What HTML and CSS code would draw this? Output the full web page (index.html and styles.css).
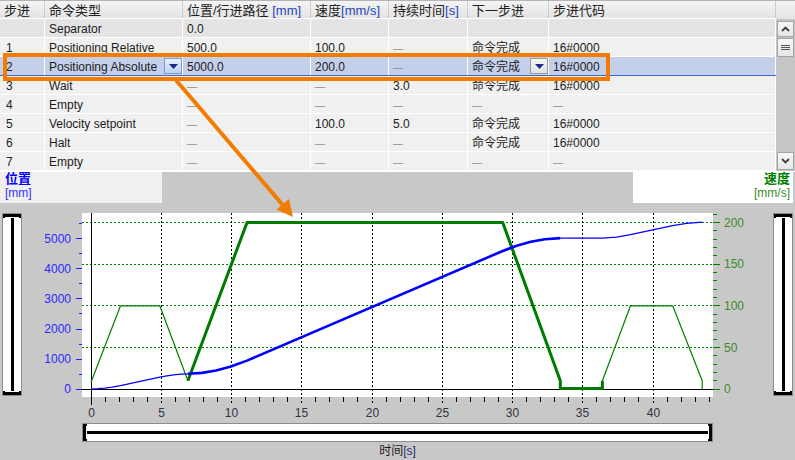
FILE: index.html
```html
<!DOCTYPE html>
<html lang="zh">
<head>
<meta charset="utf-8">
<title>Command table</title>
<link rel="stylesheet" href="styles.css">
</head>
<body>
<div class="app">
  <div class="top">
    <div class="grid">
      <div class="row head">
        <div class="c c0">步进</div>
        <div class="c">命令类型</div>
        <div class="c">位置/行进路径 <span class="unit">[mm]</span></div>
        <div class="c">速度<span class="unit">[mm/s]</span></div>
        <div class="c">持续时间<span class="unit">[s]</span></div>
        <div class="c">下一步进</div>
        <div class="c">步进代码</div>
      </div>
      <div class="row sep">
        <div class="c c0"></div><div class="c">Separator</div><div class="c">0.0</div><div class="c"></div><div class="c"></div><div class="c"></div><div class="c"></div>
      </div>
      <div class="row">
        <div class="c c0">1</div><div class="c">Positioning Relative</div><div class="c">500.0</div><div class="c">100.0</div><div class="c"><span class="dash">—</span></div><div class="c">命令完成</div><div class="c">16#0000</div>
      </div>
      <div class="row sel">
        <div class="c c0">2</div>
        <div class="c has-dd"><span>Positioning Absolute</span><span class="dd dd-hot"><svg width="9" height="5" viewBox="0 0 9 5"><path d="M0 0H9L4.5 5Z" fill="#1b2a86"/></svg></span></div>
        <div class="c">5000.0</div><div class="c">200.0</div><div class="c"><span class="dash">—</span></div>
        <div class="c has-dd"><span>命令完成</span><span class="dd"><svg width="9" height="5" viewBox="0 0 9 5"><path d="M0 0H9L4.5 5Z" fill="#1b2a86"/></svg></span></div>
        <div class="c">16#0000</div>
      </div>
      <div class="row">
        <div class="c c0">3</div><div class="c">Wait</div><div class="c"><span class="dash">—</span></div><div class="c"><span class="dash">—</span></div><div class="c">3.0</div><div class="c">命令完成</div><div class="c">16#0000</div>
      </div>
      <div class="row">
        <div class="c c0">4</div><div class="c">Empty</div><div class="c"><span class="dash">—</span></div><div class="c"><span class="dash">—</span></div><div class="c"><span class="dash">—</span></div><div class="c"><span class="dash">—</span></div><div class="c"><span class="dash">—</span></div>
      </div>
      <div class="row">
        <div class="c c0">5</div><div class="c">Velocity setpoint</div><div class="c"><span class="dash">—</span></div><div class="c">100.0</div><div class="c">5.0</div><div class="c">命令完成</div><div class="c">16#0000</div>
      </div>
      <div class="row">
        <div class="c c0">6</div><div class="c">Halt</div><div class="c"><span class="dash">—</span></div><div class="c"><span class="dash">—</span></div><div class="c"><span class="dash">—</span></div><div class="c">命令完成</div><div class="c">16#0000</div>
      </div>
      <div class="row">
        <div class="c c0">7</div><div class="c">Empty</div><div class="c"><span class="dash">—</span></div><div class="c"><span class="dash">—</span></div><div class="c"><span class="dash">—</span></div><div class="c"><span class="dash">—</span></div><div class="c"><span class="dash">—</span></div>
      </div>
    </div>
    <div class="tscroll">
      <div class="ts-head"></div>
      <div class="ts-btn ts-up"><svg width="9" height="6" viewBox="0 0 9 6"><path d="M1 5L4.5 1.5L8 5" fill="none" stroke="#404040" stroke-width="1.8"/></svg></div>
      <div class="ts-btn ts-thumb"><svg width="9" height="7" viewBox="0 0 9 7"><path d="M0 1.5H9M0 3.5H9M0 5.5H9" stroke="#555" stroke-width="1"/></svg></div>
      <div class="ts-fill"></div>
      <div class="ts-btn ts-down"><svg width="9" height="6" viewBox="0 0 9 6"><path d="M1 1L4.5 4.5L8 1" fill="none" stroke="#404040" stroke-width="1.8"/></svg></div>
    </div>
  </div>

  <div class="lower">
    <div class="labels">
      <div class="lbox lbox-l"><div class="lt-blue">位置</div><div class="lu-blue">[mm]</div></div>
      <div class="lbox lbox-r"><div class="lt-green">速度</div><div class="lu-green">[mm/s]</div></div>
    </div>
    <div class="chart-row">
      <div class="vbar"><div class="vcap vcap-t"></div><div class="vtrack"></div><div class="vcap vcap-b"></div></div>
      <div class="chart-col">
        <svg class="chart" width="751" height="220" viewBox="22 203 751 220">
          <rect x="82" y="213" width="631" height="184" fill="#fff"/>
          <g stroke="#008000" stroke-width="1" stroke-dasharray="2 2">
            <path d="M82 222.5H713M82 264.5H713M82 305.5H713M82 347.5H713"/>
          </g>
          <g stroke="#000" stroke-width="1" stroke-dasharray="2 2">
            <path d="M161.5 213V405M231.5 213V405M301.5 213V405M372.5 213V405M442.5 213V405M512.5 213V405M582.5 213V405M653.5 213V405"/>
          </g>
          <g stroke="#000" stroke-width="1">
            <path d="M91.5 213V405M82 389.5H713"/>
            <path d="M105.5 397V402M119.5 397V402M133.5 397V402M147.5 397V402M175.5 397V402M189.5 397V402M203.5 397V402M217.5 397V402M245.5 397V402M259.5 397V402M273.5 397V402M287.5 397V402M315.5 397V402M329.5 397V402M343.5 397V402M357.5 397V402M386.5 397V402M400.5 397V402M414.5 397V402M428.5 397V402M456.5 397V402M470.5 397V402M484.5 397V402M498.5 397V402M526.5 397V402M540.5 397V402M554.5 397V402M568.5 397V402M596.5 397V402M610.5 397V402M624.5 397V402M638.5 397V402M667.5 397V402M681.5 397V402M695.5 397V402M709.5 397V402"/>
          </g>
          <g stroke="#2020ff" stroke-width="1">
            <path d="M76 389.5H82M76 359.5H82M76 329.5H82M76 298.5H82M76 268.5H82M76 238.5H82"/>
            <path d="M79 374.5H82M79 344.5H82M79 313.5H82M79 283.5H82M79 253.5H82M79 223.5H82"/>
          </g>
          <g stroke="#008000" stroke-width="1">
            <path d="M713 389.5H720M713 347.5H720M713 305.5H720M713 264.5H720M713 222.5H720"/>
            <path d="M713 380.5H717M713 372.5H717M713 364.5H717M713 355.5H717M713 339.5H717M713 330.5H717M713 322.5H717M713 314.5H717M713 297.5H717M713 289.5H717M713 280.5H717M713 272.5H717M713 255.5H717M713 247.5H717M713 239.5H717M713 230.5H717M713 214.5H717"/>
          </g>
          <g class="ylab-l" text-anchor="end">
            <text x="71" y="393">0</text>
            <text x="71" y="363">1000</text>
            <text x="71" y="333">2000</text>
            <text x="71" y="303">3000</text>
            <text x="71" y="273">4000</text>
            <text x="71" y="243">5000</text>
          </g>
          <g class="ylab-r">
            <text x="724" y="393">0</text>
            <text x="724" y="352">50</text>
            <text x="724" y="310">100</text>
            <text x="724" y="268">150</text>
            <text x="724" y="227">200</text>
          </g>
          <g class="xlab" text-anchor="middle">
            <text x="91.5" y="417">0</text>
            <text x="161.5" y="417">5</text>
            <text x="231.5" y="417">10</text>
            <text x="301.5" y="417">15</text>
            <text x="372.5" y="417">20</text>
            <text x="442.5" y="417">25</text>
            <text x="512.5" y="417">30</text>
            <text x="582.5" y="417">35</text>
            <text x="653.5" y="417">40</text>
          </g>
          <g fill="none" stroke-linejoin="round">
            <polyline stroke="#008000" stroke-width="1.2" points="91,382.3 120.5,305.8 159.8,305.8 187.9,380.7"/>
            <polyline stroke="#008000" stroke-width="1.2" points="602.4,380.7 630.5,305.8 672.7,305.8 702.2,380.7 702.2,389"/>
            <polyline stroke="#0000ff" stroke-width="1.2" points="91,389 98,388.7 105,388.1 112.1,387.2 120.5,385.6 159.8,377.2 166.9,375.8 173.9,374.8 180.9,374.2 187.9,373.8"/>
            <polyline stroke="#0000ff" stroke-width="1.2" points="560.3,238.1 602.4,238.1 616.5,237.1 630.5,234.7 672.7,225.7 686.7,223.3 702.2,222.2"/>
            <polyline stroke="#007a00" stroke-width="3" points="187.9,380.7 247,222.6 502.7,222.6 560.3,380.7 560.3,388.5 602.4,388.5 602.4,380.7"/>
            <polyline stroke="#0000ff" stroke-width="2.6" points="187.9,373.8 202,372.9 216,370.5 230.1,366.8 247,360.6 502.7,251 516.7,245.7 530.8,241.8 544.8,239.2 560.3,238.1"/>
          </g>
        </svg>
        <div class="hbar"><div class="hcap hcap-l"></div><div class="htrack"></div><div class="hcap hcap-r"></div></div>
        <div class="xtitle">时间<span class="xunit">[s]</span></div>
      </div>
      <div class="vbar"><div class="vcap vcap-t"></div><div class="vtrack"></div><div class="vcap vcap-b"></div></div>
    </div>
  </div>

  <svg class="overlay" width="795" height="460" viewBox="0 0 795 460">
    <rect x="5" y="55" width="603" height="24" fill="none" stroke="#f27c00" stroke-width="4"/>
    <line x1="175" y1="79" x2="284" y2="206.5" stroke="#f27c00" stroke-width="4"/>
    <polygon points="293,217 276.5,209.5 289,199" fill="#f27c00"/>
  </svg>
</div>
</body>
</html>
```

FILE: styles.css
```css
* { box-sizing: border-box; }
html, body { margin: 0; padding: 0; }
body {
  width: 795px;
  height: 460px;
  overflow: hidden;
  font-family: "Liberation Sans", "Noto Sans CJK SC", sans-serif;
  font-size: 12px;
  color: #1c1c1c;
  background: #c8c8c8;
}
.app { position: relative; width: 795px; height: 460px; }

.top { display: flex; height: 171px; background: #f0f0f0; }
.grid { width: 776px; }
.row {
  display: grid;
  grid-template-columns: 45px 138px 128px 78px 79px 81px 227px;
  height: 19px;
  border-bottom: 1px solid #ffffff;
  background: #f0f0f0;
}
.c {
  display: block;
  padding: 2px 0 0 4px;
  border-right: 1px solid #ffffff;
  white-space: nowrap;
  overflow: hidden;
  line-height: 16px;
}
.c.has-dd {
  display: flex;
  align-items: center;
  padding-top: 0;
}
.has-dd > span:first-child { padding-top: 2px; }
.c0 { padding-left: 6px; }
.head {
  background: linear-gradient(#f4f4f4, #e3e3e3);
  border-top: 1px solid #b4b4b4;
  border-bottom: 1px solid #ffffff;
  font-size: 13px;
  color: #222;
}
.head .c { border-right: 1px solid #cdcdcd; padding-top: 1px; line-height: 17px; }
.head .c0 { padding-left: 4px; }
.unit { color: #2346b8; }
.sep { background: #e4e4e4; }
.sel { background: #c4d0ea; border-bottom: 1px solid #3a66d0; }
.dash { color: #8c8c8c; font-size: 10px; }

.dd {
  margin-left: auto;
  width: 18px;
  height: 16px;
  display: flex;
  align-items: center;
  justify-content: center;
  border: 1px solid #9a9a9a;
  background: linear-gradient(#f6f6f6, #e0e0e0);
}
.dd-hot {
  border-color: #7d9ccc;
  background: linear-gradient(#e6f0fb, #b9d2f1);
}

.tscroll {
  width: 19px;
  display: flex;
  flex-direction: column;
  align-items: center;
  background: #c6c6c6;
}
.ts-head {
  width: 19px;
  height: 19px;
  flex: none;
  background: linear-gradient(#f4f4f4, #e3e3e3);
  border-top: 1px solid #b4b4b4;
}
.ts-btn {
  width: 17px;
  flex: none;
  display: flex;
  align-items: center;
  justify-content: center;
  border: 1px solid #a4a4a4;
  background: linear-gradient(#f7f7f7, #e6e6e6);
}
.ts-up { height: 16px; margin-top: 2px; }
.ts-thumb { height: 19px; margin-top: 1px; }
.ts-fill { flex: 1; }
.ts-down { height: 18px; margin-bottom: 1px; }

.lower { height: 289px; background: #c8c8c8; border-top: 1px solid #ffffff; }
.labels {
  display: flex;
  justify-content: space-between;
  height: 31px;
}
.lbox { width: 162px; height: 31px; padding-top: 0; }
.lbox-l { background: #f0f0f0; padding-left: 5px; }
.lbox-r { width: 160px; background: #ffffff; margin-right: 2px; text-align: right; padding-right: 3px; }
.lt-blue, .lt-green { font-weight: bold; font-size: 13px; line-height: 14px; }
.lu-blue, .lu-green { font-size: 12px; line-height: 15px; }
.lt-blue { color: #0000ff; }
.lu-blue { color: #3030ff; }
.lt-green { color: #008000; }
.lu-green { color: #3a8c2a; }

.chart-row { display: flex; padding-left: 2px; }
.vbar {
  width: 20px;
  height: 183px;
  margin-top: 10px;
  border: 1px solid #8c8c8c;
  background: #ffffff;
  display: flex;
  flex-direction: column;
}
.vcap { height: 4px; border-left: 2px solid #000; border-right: 2px solid #000; flex: none; }
.vcap-t { border-top: 3px solid #000; }
.vcap-b { border-bottom: 3px solid #000; }
.vtrack { flex: 1; background: linear-gradient(#000, #000) center / 3px 100% no-repeat; }

.chart-col { width: 751px; display: flex; flex-direction: column; }
.chart { display: block; }
.chart text { font-family: "Liberation Sans", sans-serif; font-size: 12px; }
.ylab-l text { fill: #2a2aff; }
.ylab-r text { fill: #3a8c2a; }
.xlab text { fill: #333340; }

.hbar {
  margin-left: 60px;
  width: 631px;
  height: 19px;
  border: 1px solid #8c8c8c;
  background: #ffffff;
  display: flex;
}
.hcap { width: 4px; border-top: 2px solid #000; border-bottom: 2px solid #000; flex: none; }
.hcap-l { border-left: 3px solid #000; }
.hcap-r { border-right: 3px solid #000; }
.htrack { flex: 1; background: linear-gradient(#000, #000) center / 100% 3px no-repeat; }

.xtitle {
  margin-top: 1px;
  line-height: 16px;
  text-align: center;
  font-size: 12px;
  color: #1a1a1a;
}
.xunit { color: #24307a; }

.overlay { position: absolute; left: 0; top: 0; pointer-events: none; }
```
